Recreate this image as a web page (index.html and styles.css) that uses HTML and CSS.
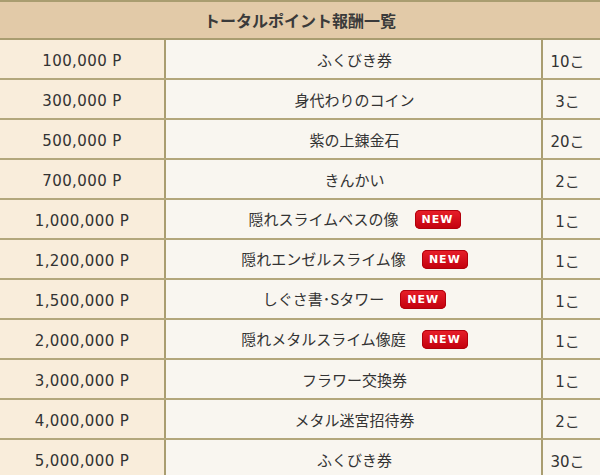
FILE: index.html
```html
<!DOCTYPE html>
<html lang="ja">
<head>
<meta charset="utf-8">
<title>トータルポイント報酬一覧</title>
<link rel="stylesheet" href="styles.css">
</head>
<body>
<table class="reward-table">
  <colgroup>
    <col class="col-pt">
    <col class="col-item">
    <col class="col-num">
  </colgroup>
  <thead>
    <tr><th colspan="3">トータルポイント報酬一覧</th></tr>
  </thead>
  <tbody>
    <tr><td class="pt">100,000 P</td><td class="item">ふくびき券</td><td class="num">10こ</td></tr>
    <tr><td class="pt">300,000 P</td><td class="item">身代わりのコイン</td><td class="num">3こ</td></tr>
    <tr><td class="pt">500,000 P</td><td class="item">紫の上錬金石</td><td class="num">20こ</td></tr>
    <tr><td class="pt">700,000 P</td><td class="item">きんかい</td><td class="num">2こ</td></tr>
    <tr><td class="pt">1,000,000 P</td><td class="item">隠れスライムベスの像<span class="new">NEW</span></td><td class="num">1こ</td></tr>
    <tr><td class="pt">1,200,000 P</td><td class="item">隠れエンゼルスライム像<span class="new">NEW</span></td><td class="num">1こ</td></tr>
    <tr><td class="pt">1,500,000 P</td><td class="item">しぐさ書･Sタワー<span class="new">NEW</span></td><td class="num">1こ</td></tr>
    <tr><td class="pt">2,000,000 P</td><td class="item">隠れメタルスライム像庭<span class="new">NEW</span></td><td class="num">1こ</td></tr>
    <tr><td class="pt">3,000,000 P</td><td class="item">フラワー交換券</td><td class="num">1こ</td></tr>
    <tr><td class="pt">4,000,000 P</td><td class="item">メタル迷宮招待券</td><td class="num">2こ</td></tr>
    <tr><td class="pt">5,000,000 P</td><td class="item">ふくびき券</td><td class="num">30こ</td></tr>
  </tbody>
</table>
</body>
</html>
```
FILE: styles.css
```css
html, body {
  margin: 0;
  padding: 0;
  background: #f9f6f0;
}

body {
  font-family: "DejaVu Sans", "Noto Sans CJK JP", sans-serif;
  font-size: 15px;
  color: #333;
}

.reward-table {
  width: 600px;
  border-collapse: collapse;
  table-layout: fixed;
  border-top: 2px solid #a99d70;
}

.col-pt { width: 165px; }
.col-num { width: 58px; }

.reward-table th {
  height: 36px;
  padding: 0;
  background: #e2caa8;
  font-family: "Noto Sans CJK JP", sans-serif;
  font-size: 16px;
  font-weight: bold;
  color: #3a3a3a;
  text-align: center;
  border-bottom: 2px solid #a99d70;
}

.reward-table td {
  height: 38px;
  padding: 0;
  text-align: center;
  border-bottom: 2px solid #b3a77c;
  white-space: nowrap;
}

.reward-table td.pt {
  height: 35px;
  padding-top: 3px;
  background: #f9eddb;
  border-right: 2px solid #a99d70;
  letter-spacing: 0.4px;
}

.reward-table td.item {
  background: #f9f6f0;
  border-right: 2px solid #a99d70;
  font-family: "Noto Sans CJK JP", sans-serif;
  padding-left: 2px;
}

.reward-table td.num {
  height: 36px;
  padding-top: 2px;
  background: #f9f6f0;
  padding-right: 8px;
}

.new {
  display: inline-block;
  vertical-align: middle;
  margin-left: 16px;
  width: 46px;
  height: 19px;
  line-height: 19px;
  border-radius: 5px;
  background: linear-gradient(#e8202a, #c2000e);
  box-shadow: inset 0 0 0 1px #b0000c;
  color: #fff;
  font-family: "DejaVu Sans", sans-serif;
  font-size: 11px;
  font-weight: bold;
  letter-spacing: 1px;
  text-align: center;
  position: relative;
  top: -1px;
}
```
